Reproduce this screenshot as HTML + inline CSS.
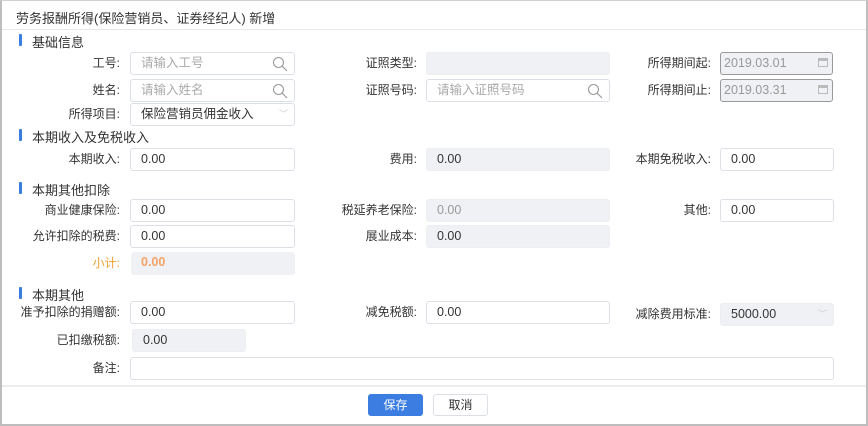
<!DOCTYPE html>
<html><head><meta charset="utf-8"><style>
*{box-sizing:border-box;margin:0;padding:0}
body{width:868px;height:426px;background:#fff;font-family:"Liberation Sans","Noto Sans CJK SC",sans-serif;font-size:12px;color:#333;position:relative;overflow:hidden}
.frame{position:absolute;left:0;top:0;width:868px;height:426px;border:2px solid #bdbdbd;border-top:1px solid #d0d0d0}
.t{position:absolute;left:16px;top:8px;font-size:13px;color:#333}
.hl{position:absolute;left:2px;right:2px;height:1px;background:#e8e8e8}
.sec{position:absolute;left:32px;font-size:13px;color:#333}
.sec:before{content:"";position:absolute;left:-13px;top:2px;width:3px;height:12px;background:#3a7de0;border-radius:1px}
.l{position:absolute;text-align:right;width:120px;height:22px;line-height:22px;white-space:nowrap}
.i{position:absolute;height:23px;border:1px solid #dcdfe6;border-radius:3px;line-height:21px;padding-left:10px;font-size:12.5px;color:#333;background:#fff}
.d{background:#f0f1f4;border-color:#eceef2}
.ph{color:#aaa}
.btn{position:absolute;top:394px;height:22px;width:55px;border-radius:3px;text-align:center;line-height:20px;font-size:12px}
</style></head><body>
<div class="frame"></div>
<div class="t">劳务报酬所得(保险营销员、证券经纪人) 新增</div>
<div class="hl" style="top:29px"></div>
<div class="sec" style="top:32px">基础信息</div>
<div class="l" style="left:0;top:52px">工号:</div>
<div class="i ph" style="left:130px;top:52px;width:165px">请输入工号<svg style="position:absolute;right:6px;top:3px" width="16" height="16" viewBox="0 0 16 16"><circle cx="6.5" cy="6.5" r="5" fill="none" stroke="#999" stroke-width="1.1"/><path d="M10.2 10.2L15 15" stroke="#999" stroke-width="1.1"/></svg></div>
<div class="l" style="left:0;top:79px">姓名:</div>
<div class="i ph" style="left:130px;top:79px;width:165px">请输入姓名<svg style="position:absolute;right:6px;top:3px" width="16" height="16" viewBox="0 0 16 16"><circle cx="6.5" cy="6.5" r="5" fill="none" stroke="#999" stroke-width="1.1"/><path d="M10.2 10.2L15 15" stroke="#999" stroke-width="1.1"/></svg></div>
<div class="l" style="left:0;top:103px">所得项目:</div>
<div class="i" style="left:130px;top:103px;width:165px">保险营销员佣金收入<span style="position:absolute;right:6px;top:0;color:#ccc;font-size:9px">﹀</span></div>
<div class="l" style="left:297px;top:52px">证照类型:</div>
<div class="i d" style="left:426px;top:52px;width:184px"></div>
<div class="l" style="left:297px;top:79px">证照号码:</div>
<div class="i ph" style="left:426px;top:79px;width:184px">请输入证照号码<svg style="position:absolute;right:6px;top:3px" width="16" height="16" viewBox="0 0 16 16"><circle cx="6.5" cy="6.5" r="5" fill="none" stroke="#999" stroke-width="1.1"/><path d="M10.2 10.2L15 15" stroke="#999" stroke-width="1.1"/></svg></div>
<div class="l" style="left:591px;top:52px">所得期间起:</div>
<div class="i d" style="left:720px;top:52px;width:113px;border-color:#999;color:#999;padding-left:3px">2019.03.01<span style="position:absolute;right:4px;top:5px;width:10px;height:9px;border:1px solid #bbb;border-top-width:3px"></span></div>
<div class="l" style="left:591px;top:79px">所得期间止:</div>
<div class="i d" style="left:720px;top:79px;width:113px;border-color:#999;color:#999;padding-left:3px">2019.03.31<span style="position:absolute;right:4px;top:5px;width:10px;height:9px;border:1px solid #bbb;border-top-width:3px"></span></div>

<div class="sec" style="top:127px">本期收入及免税收入</div>
<div class="l" style="left:0;top:148px">本期收入:</div>
<div class="i" style="left:130px;top:148px;width:165px">0.00</div>
<div class="l" style="left:297px;top:148px">费用:</div>
<div class="i d" style="left:426px;top:148px;width:184px">0.00</div>
<div class="l" style="left:591px;top:148px">本期免税收入:</div>
<div class="i" style="left:720px;top:148px;width:114px">0.00</div>

<div class="sec" style="top:180px">本期其他扣除</div>
<div class="l" style="left:0;top:199px">商业健康保险:</div>
<div class="i" style="left:130px;top:199px;width:165px">0.00</div>
<div class="l" style="left:297px;top:199px">税延养老保险:</div>
<div class="i d" style="left:426px;top:199px;width:184px;color:#999">0.00</div>
<div class="l" style="left:591px;top:199px">其他:</div>
<div class="i" style="left:720px;top:199px;width:114px">0.00</div>
<div class="l" style="left:0;top:225px">允许扣除的税费:</div>
<div class="i" style="left:130px;top:225px;width:165px">0.00</div>
<div class="l" style="left:297px;top:225px">展业成本:</div>
<div class="i d" style="left:426px;top:225px;width:184px">0.00</div>
<div class="l" style="left:0;top:252px;color:#f0a030">小计:</div>
<div class="i d" style="left:131px;top:252px;width:164px;color:#f5a366;font-weight:bold;border:none">0.00</div>

<div class="sec" style="top:285px">本期其他</div>
<div class="l" style="left:0;top:301px">准予扣除的捐赠额:</div>
<div class="i" style="left:130px;top:301px;width:165px">0.00</div>
<div class="l" style="left:297px;top:301px">减免税额:</div>
<div class="i" style="left:426px;top:301px;width:184px">0.00</div>
<div class="l" style="left:591px;top:303px">减除费用标准:</div>
<div class="i d" style="left:720px;top:303px;width:114px">5000.00<span style="position:absolute;right:6px;top:0;color:#ccc;font-size:9px">﹀</span></div>
<div class="l" style="left:0;top:329px">已扣缴税额:</div>
<div class="i d" style="left:132px;top:329px;width:114px">0.00</div>
<div class="l" style="left:0;top:357px">备注:</div>
<div class="i" style="left:130px;top:357px;width:704px"></div>

<div class="hl" style="top:385px;height:2px;background:#ececec"></div>
<div class="btn" style="left:368px;background:#3b7de0;color:#fff;border:1px solid #3b7de0">保存</div>
<div class="btn" style="left:433px;border:1px solid #dcdfe6;color:#333">取消</div>
</body></html>
